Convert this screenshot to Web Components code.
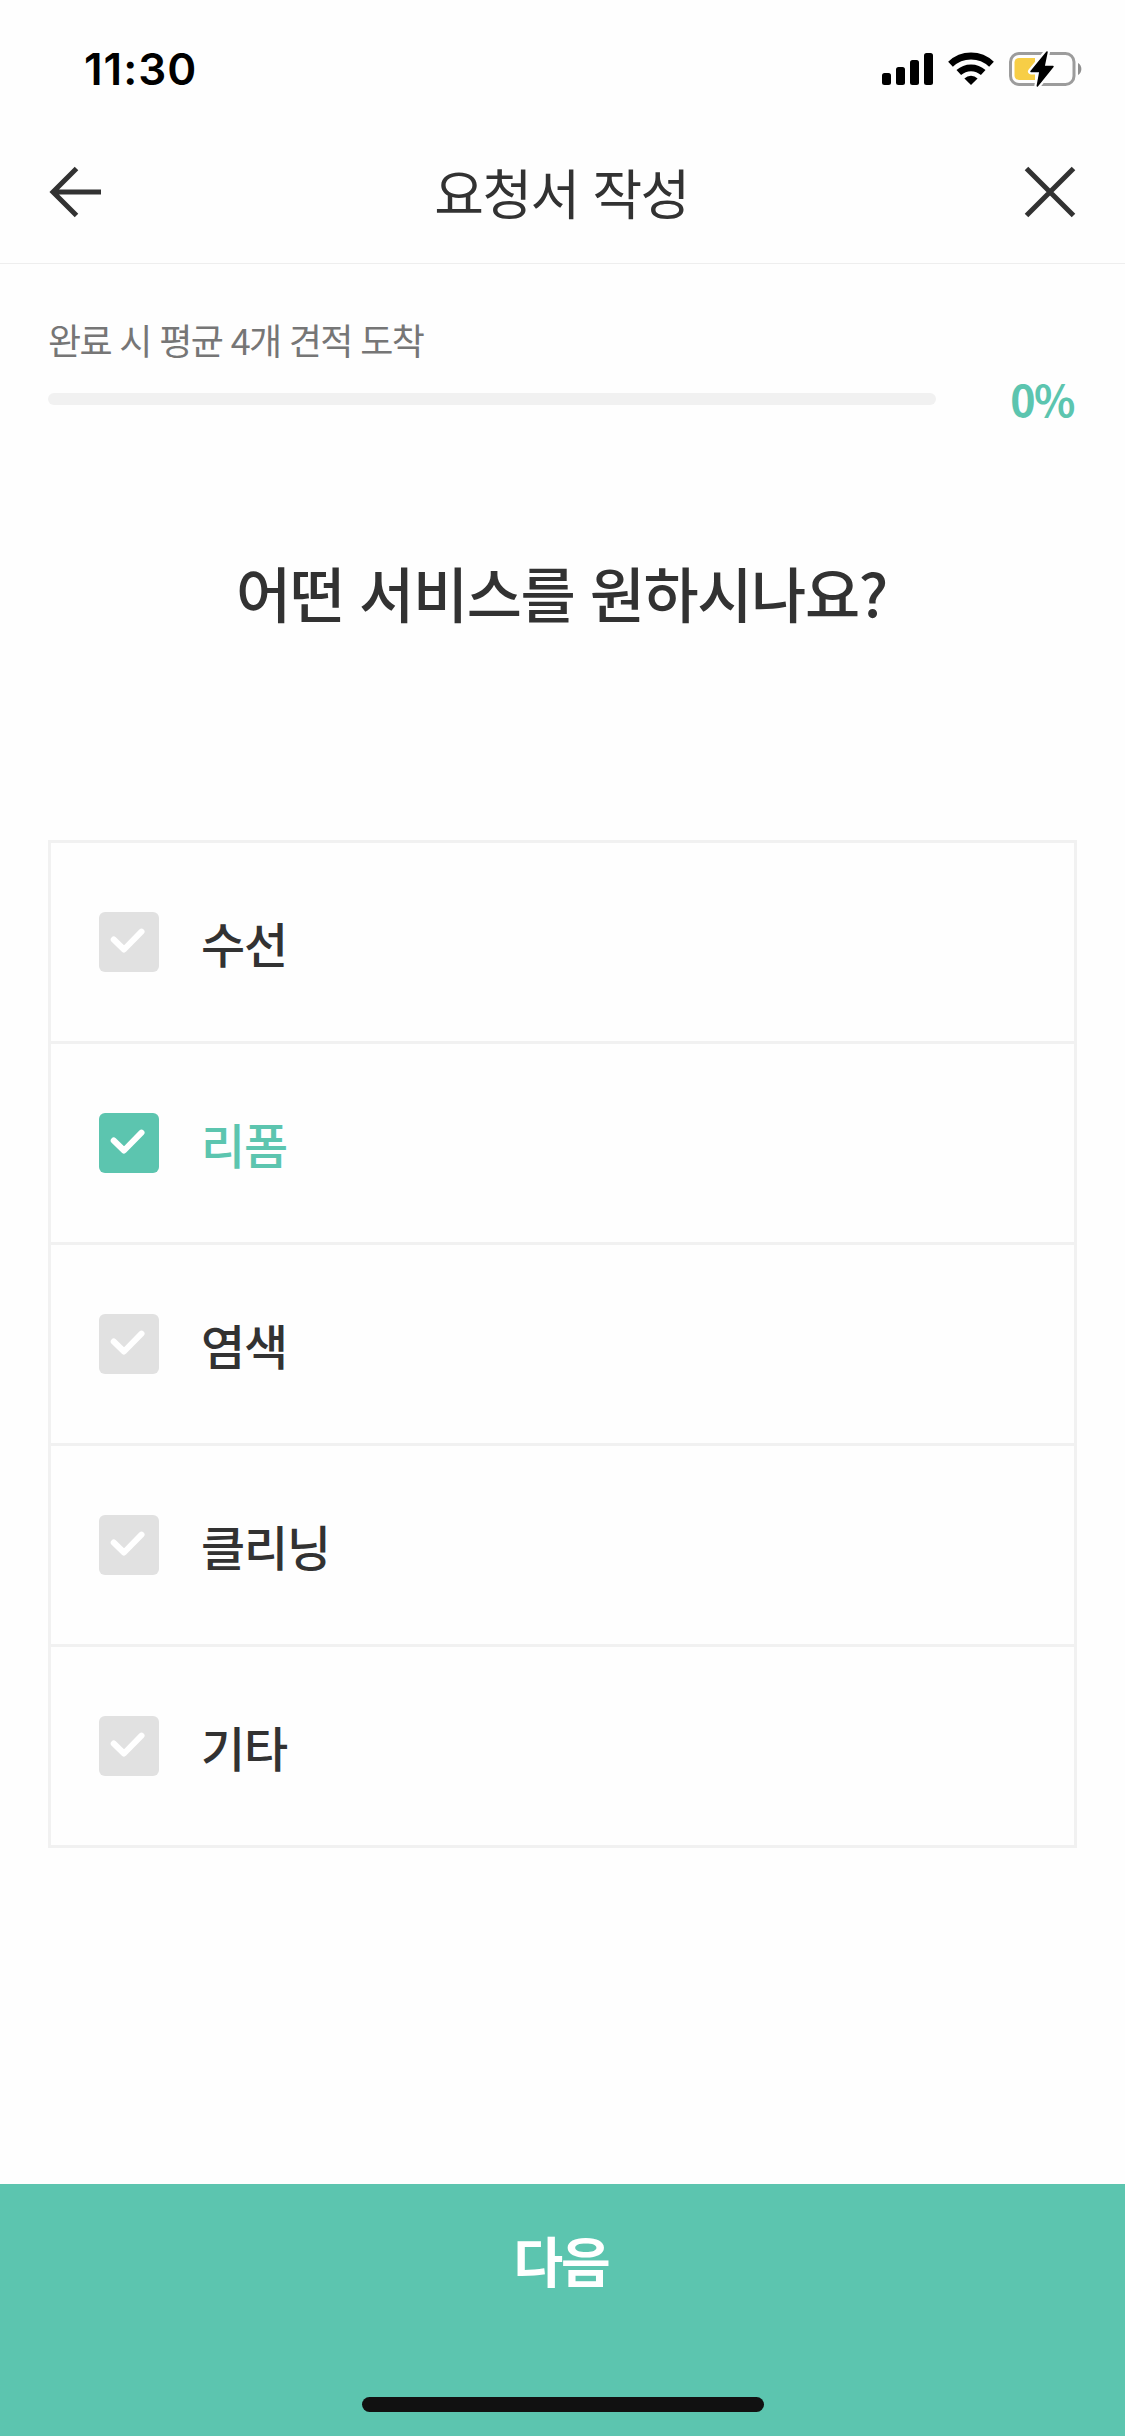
<!DOCTYPE html>
<html lang="ko">
<head>
<meta charset="utf-8">
<title>요청서 작성</title>
<style>
  html, body { margin: 0; background: #fefefe; }
  body {
    width: 1125px; height: 2436px; overflow: hidden;
    font-family: "Noto Sans CJK KR", "Noto Sans", sans-serif;
    color: #323232;
    --accent: #5cc5af;
    --line: #f1f1f1;
  }
</style>
</head>
<body>
<request-screen>
  <status-bar time="11:30"></status-bar>
  <nav-header>요청서 작성</nav-header>
  <progress-meter percent="0">완료 시 평균 4개 견적 도착</progress-meter>
  <question-title>어떤 서비스를 원하시나요?</question-title>
  <option-list>
    <option-row>수선</option-row>
    <option-row checked>리폼</option-row>
    <option-row>염색</option-row>
    <option-row>클리닝</option-row>
    <option-row>기타</option-row>
  </option-list>
  <next-button slot="footer">다음</next-button>
</request-screen>
<script>
  const define = (name, html, setup) => customElements.define(name, class extends HTMLElement {
    connectedCallback() {
      if (this.shadowRoot) return;
      this.attachShadow({ mode: 'open' }).innerHTML = html;
      if (setup) setup(this, this.shadowRoot);
    }
  });

  define('request-screen', `
    <style>
      :host { display: flex; flex-direction: column; width: 1125px; height: 2436px; }
      main { flex: 1; display: flex; flex-direction: column; }
    </style>
    <main><slot></slot></main>
    <slot name="footer"></slot>`);

  define('status-bar', `
    <style>
      :host { display: flex; justify-content: space-between; height: 132px; box-sizing: border-box; padding: 45px 41px 0 84px; }
      .time { font: 600 44px/48px Inter, sans-serif; color: #000; letter-spacing: 1px; }
      .icons { display: flex; gap: 12px; height: 48px; }
      svg { display: block; height: 48px; }
    </style>
    <span class="time"></span>
    <div class="icons">
      <svg width="54" viewBox="880 45 54 48">
        <rect x="882" y="73" width="9" height="12" rx="2.5"/>
        <rect x="896" y="67" width="9" height="18" rx="2.5"/>
        <rect x="910" y="60" width="9" height="25" rx="2.5"/>
        <rect x="924" y="53" width="9" height="32" rx="2.5"/>
      </svg>
      <svg width="50" viewBox="946 45 50 48">
        <g fill="none" stroke="#000" stroke-width="6.8">
          <path d="M950.5 64.3 A29.5 29.5 0 0 1 991.5 64.3"/>
          <path d="M958.8 72.6 A18 18 0 0 1 983.2 72.6"/>
        </g>
        <path d="M971 85 L964.4 78.4 A9.6 9.6 0 0 1 977.6 78.4 Z"/>
      </svg>
      <svg width="76" viewBox="1008 45 76 48">
        <rect x="1010.5" y="53.500" width="63.500" height="31" rx="8.500" fill="none" stroke="#9c9c9c" stroke-width="3"/>
        <path d="M1078 63 A7 7 0 0 1 1078 75 Z" fill="#8f8f8f"/>
        <path d="M1019 58 H1035 V80 H1019 A4.5 4.5 0 0 1 1014.500 75.5 V62.5 A4.500 4.500 0 0 1 1019 58 Z" fill="#f7ce46"/>
        <path d="M1047 52 L1031 71.500 H1040 L1037.300 86 L1053 66.500 H1044 Z" fill="#fefefe" stroke="#fefefe" stroke-width="6" stroke-linejoin="round"/>
        <path d="M1047 52 L1031 71.500 H1040 L1037.300 86 L1053 66.500 H1044 Z" stroke="#000" stroke-width="1.500" stroke-linejoin="round"/>
      </svg>
    </div>`, (el, root) => { root.querySelector('.time').textContent = el.getAttribute('time'); });

  define('nav-header', `
    <style>
      :host { display: flex; align-items: center; justify-content: space-between; height: 132px; box-sizing: border-box; padding: 0 48px 11px; border-bottom: 1px solid #eeeeee; }
      h1 { margin: 0 2px 0 0; font-size: 54px; line-height: 80px; font-weight: 400; letter-spacing: -1.5px; }
      svg { display: block; fill: none; stroke: #323232; stroke-width: 5; }
    </style>
    <svg width="54" height="54" viewBox="0 0 54 54"><path d="M5 27 H53 M28.500 3.500 L5 27 L28.500 50.500"/></svg>
    <h1><slot></slot></h1>
    <svg width="54" height="54" viewBox="0 0 54 54"><path d="M3.500 3.500 L50.500 50.500 M50.500 3.500 L3.500 50.500"/></svg>`);

  define('progress-meter', `
    <style>
      :host { display: flex; justify-content: space-between; padding: 48px 51px 0 48px; height: 113px; }
      .left { width: 888px; }
      .caption { font-size: 36px; line-height: 54px; color: #767676; letter-spacing: -1.650px; }
      .track { height: 12px; margin-top: 27px; border-radius: 6px; background: var(--line); overflow: hidden; }
      .fill { height: 100%; background: var(--accent); }
      .value { align-self: flex-start; margin-top: 56px; font-size: 43px; line-height: 60px; font-weight: 700; color: var(--accent); letter-spacing: -1.5px; }
    </style>
    <div class="left">
      <div class="caption"><slot></slot></div>
      <div class="track"><div class="fill"></div></div>
    </div>
    <span class="value"></span>`, (el, root) => {
      const p = el.getAttribute('percent');
      root.querySelector('.fill').style.width = p + '%';
      root.querySelector('.value').textContent = p + '%';
    });

  define('question-title', `
    <style>
      :host { display: block; padding: 122px 2px 0 0; height: 293px; text-align: center; }
      h2 { margin: 0; font-size: 60px; line-height: 90px; font-weight: 500; letter-spacing: -1.4px; }
    </style>
    <h2><slot></slot></h2>`);

  define('option-list', `
    <style>
      :host { display: flex; flex-direction: column; margin: 0 48px; border: 3px solid var(--line); border-bottom: 0; }
    </style>
    <slot></slot>`);

  define('option-row', `
    <style>
      :host { display: flex; align-items: center; gap: 42px; height: 198px; padding-left: 48px; border-bottom: 3px solid var(--line); font-size: 48px; line-height: 72px; font-weight: 500; letter-spacing: -1.200px; }
      .box { width: 60px; height: 60px; border-radius: 6px; background: #e1e1e1; }
      :host([checked]) { color: var(--accent); }
      :host([checked]) .box { background: var(--accent); }
      svg { display: block; fill: none; stroke: #fff; stroke-width: 6; stroke-linecap: round; stroke-linejoin: round; }
    </style>
    <div class="box"><svg width="60" height="60" viewBox="0 0 60 60"><path d="M14.700 27.500 L25 37.500 L42.500 19.700"/></svg></div>
    <span><slot></slot></span>`);

  define('next-button', `
    <style>
      :host { display: flex; flex-direction: column; align-items: center; justify-content: space-between; height: 252px; box-sizing: border-box; padding: 36px 0 24px; background: var(--accent); color: #fff; }
      .label { margin-right: 3px; font-size: 54px; line-height: 80px; font-weight: 700; letter-spacing: -2.200px; }
      .home { width: 402px; height: 15px; border-radius: 8px; background: #111; }
    </style>
    <span class="label"><slot></slot></span>
    <div class="home"></div>`);
</script>
</body>
</html>
